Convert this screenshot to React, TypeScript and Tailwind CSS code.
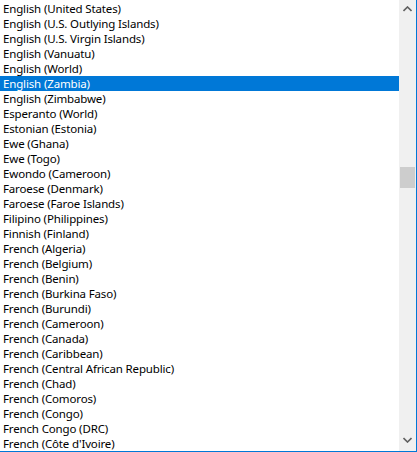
const languages = [
  "English (United States)",
  "English (U.S. Outlying Islands)",
  "English (U.S. Virgin Islands)",
  "English (Vanuatu)",
  "English (World)",
  "English (Zambia)",
  "English (Zimbabwe)",
  "Esperanto (World)",
  "Estonian (Estonia)",
  "Ewe (Ghana)",
  "Ewe (Togo)",
  "Ewondo (Cameroon)",
  "Faroese (Denmark)",
  "Faroese (Faroe Islands)",
  "Filipino (Philippines)",
  "Finnish (Finland)",
  "French (Algeria)",
  "French (Belgium)",
  "French (Benin)",
  "French (Burkina Faso)",
  "French (Burundi)",
  "French (Cameroon)",
  "French (Canada)",
  "French (Caribbean)",
  "French (Central African Republic)",
  "French (Chad)",
  "French (Comoros)",
  "French (Congo)",
  "French Congo (DRC)",
  "French (Côte d'Ivoire)",
];

const selected = "English (Zambia)";

const ScrollBar = () => {
  return (
    <div className="w-[17px] h-full bg-[#f0f0f0] flex flex-col items-center">
      <div className="h-[17px] w-full flex items-center justify-center">
        <svg width="9" height="6" viewBox="0 0 9 6">
          <path d="M0.5 5 L4.5 1 L8.5 5" fill="none" stroke="#606060" strokeWidth="1.6" />
        </svg>
      </div>
      <div className="flex-1 w-full relative">
        <div className="absolute left-[1px] top-[150px] w-[15px] h-[21px] bg-[#cdcdcd]" />
      </div>
      <div className="h-[17px] w-full flex items-center justify-center mb-[3px]">
        <svg width="9" height="6" viewBox="0 0 9 6">
          <path d="M0.5 1 L4.5 5 L8.5 1" fill="none" stroke="#606060" strokeWidth="1.6" />
        </svg>
      </div>
    </div>
  );
};

export default function App() {
  return (
    <div
      className="w-[417px] h-[452px] bg-white border-r border-b border-[#0078d7] flex flex-row overflow-hidden"
      style={{ fontFamily: '"Noto Sans", "Liberation Sans", sans-serif' }}
    >
      <div className="flex-1 pt-[1px] overflow-hidden">
        {languages.map((lang) => (
          <div
            key={lang}
            className={
              lang === selected
                ? "h-[15px] pl-[3px] text-[11.5px] tracking-[-0.15px] leading-[15px] whitespace-nowrap bg-[#0078d7] text-white"
                : "h-[15px] pl-[3px] text-[11.5px] tracking-[-0.15px] leading-[15px] whitespace-nowrap text-black"
            }
          >
            {lang}
          </div>
        ))}
      </div>
      <ScrollBar />
    </div>
  );
}
